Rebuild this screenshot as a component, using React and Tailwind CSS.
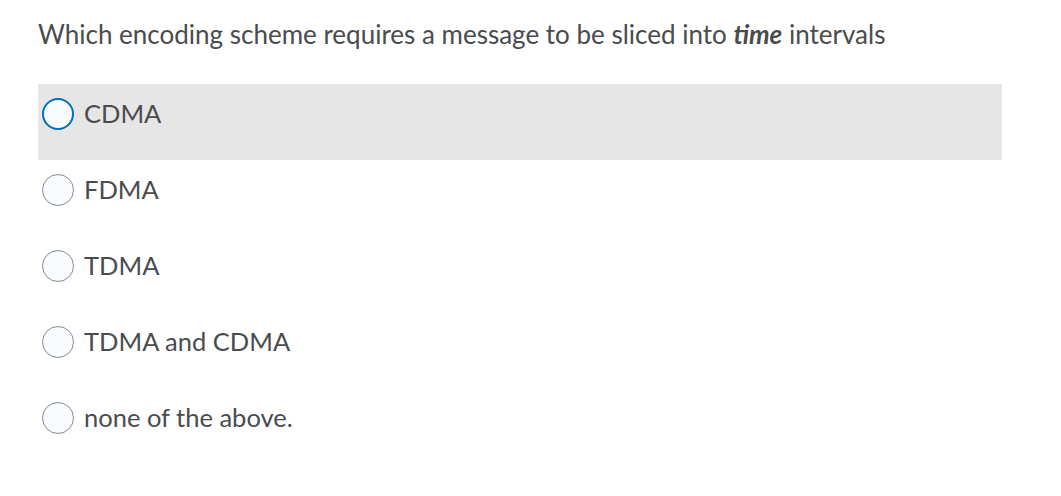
const OPTIONS = ['CDMA', 'FDMA', 'TDMA', 'TDMA and CDMA', 'none of the above.'];

export default function App() {
  const hovered = 0;

  return (
    <div className="min-h-screen bg-white text-[#494c4e]" style={{ fontFamily: 'Lato, "Noto Sans", sans-serif' }}>
      <div className="pl-[38px] pt-[18px] w-[1002px]">
        <p className="text-[26px] leading-[32px]">
          Which encoding scheme requires a message to be sliced into <b><i>time</i></b> intervals
        </p>

        <div className="mt-[34px] flex flex-col">
          {OPTIONS.map((opt, i) => (
            <label
              key={opt}
              className={`h-[76px] flex items-start pt-[14px] pl-[4px] gap-[10px] ${i === hovered ? 'bg-[#e6e6e6]' : ''}`}
            >
              <span
                className={`w-[32px] h-[32px] rounded-full bg-[#f9fbff] shrink-0 ${
                  i === hovered ? 'border-2 border-[#006fbf]' : 'border border-[#868c96]'
                }`}
              />
              <span className="text-[25.5px] leading-[30px]">{opt}</span>
            </label>
          ))}
        </div>
      </div>
    </div>
  );
}
